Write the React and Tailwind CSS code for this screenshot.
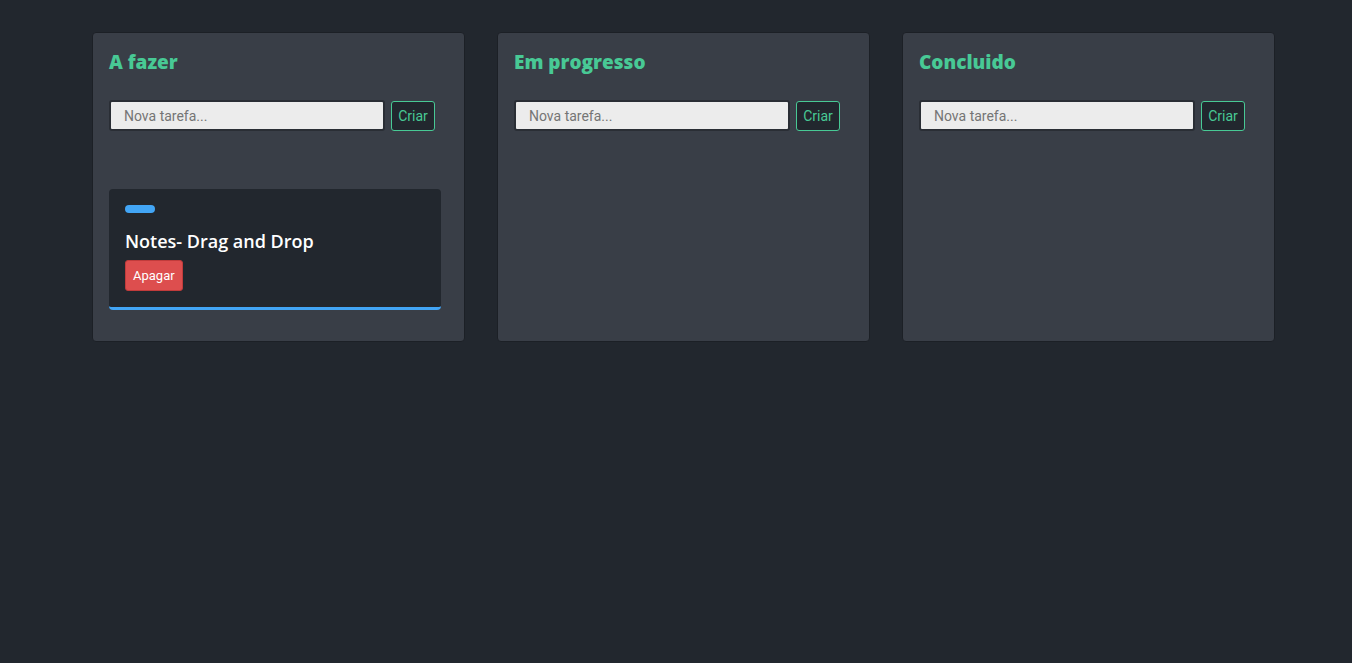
const columns = [
  { title: "A fazer", cards: [{ title: "Notes- Drag and Drop" }] },
  { title: "Em progresso", cards: [] },
  { title: "Concluido", cards: [] },
];

function Card({ title }) {
  return (
    <div className="mt-[58px] w-[332px] rounded bg-[#22272e] border-b-[3px] border-[#42a5f5] px-4 pt-4 pb-[16px]">
      <div className="w-[30px] h-[8px] rounded-full bg-[#42a5f5]" />
      <h3 className="mt-[15px] text-[18px] leading-[26px] font-semibold text-white font-['Open_Sans',sans-serif]">
        {title}
      </h3>
      <button className="mt-[6px] h-[31px] px-[7px] rounded-[3px] bg-[#dd4e4e] border border-[#c13b3b] text-white text-[13px] font-['Roboto',sans-serif]">
        Apagar
      </button>
    </div>
  );
}

function Column({ title, cards }) {
  return (
    <div className="w-[373px] h-[310px] shrink-0 rounded bg-[#393e47] border border-[#1c2026] p-4">
      <h2 className="text-[19px] leading-[27px] font-extrabold text-[#48c995] font-['Open_Sans',sans-serif]">
        {title}
      </h2>
      <div className="mt-[24px] flex items-start gap-[6px]">
        <input
          placeholder="Nova tarefa..."
          className="w-[276px] h-[31px] rounded-[3px] bg-[#ececec] border-2 border-[#2a2e35] px-[13px] text-[14px] text-[#333] placeholder:text-[#757575] font-['Roboto',sans-serif] outline-none"
        />
        <button className="mt-px h-[30px] w-[44px] rounded-[3px] border border-[#48c995] bg-[#22272e] text-[#48c995] text-[14px] font-['Roboto',sans-serif]">
          Criar
        </button>
      </div>
      {cards.map((c, i) => (
        <Card key={i} title={c.title} />
      ))}
    </div>
  );
}

export default function App() {
  return (
    <div className="min-h-screen bg-[#22272e] pt-[32px] pl-[92px] flex gap-[32px]">
      {columns.map((col) => (
        <Column key={col.title} title={col.title} cards={col.cards} />
      ))}
    </div>
  );
}
